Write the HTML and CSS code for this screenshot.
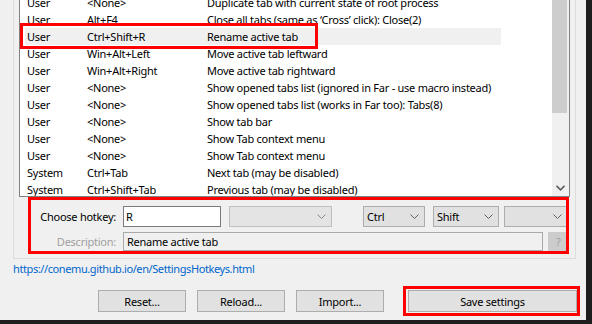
FILE: index.html
```html
<!DOCTYPE html>
<html lang="en">
<head>
  <meta charset="UTF-8" />
  <title>Settings - Keys &amp; Macro</title>
  <link rel="stylesheet" href="styles.css">
</head>
<body>
  <div class="window">
    <div class="group">
      <div class="list">
        <div class="list-rows">
          <div class="row"><span class="cell c-type">User</span><span class="cell c-key">&lt;None&gt;</span><span class="cell c-desc">Duplicate tab with current state of root process</span></div>
          <div class="row"><span class="cell c-type">User</span><span class="cell c-key">Alt+F4</span><span class="cell c-desc">Close all tabs (same as ‘Cross’ click): Close(2)</span></div>
          <div class="row selected marked"><span class="cell c-type">User</span><span class="cell c-key">Ctrl+Shift+R</span><span class="cell c-desc">Rename active tab</span></div>
          <div class="row"><span class="cell c-type">User</span><span class="cell c-key">Win+Alt+Left</span><span class="cell c-desc">Move active tab leftward</span></div>
          <div class="row"><span class="cell c-type">User</span><span class="cell c-key">Win+Alt+Right</span><span class="cell c-desc">Move active tab rightward</span></div>
          <div class="row"><span class="cell c-type">User</span><span class="cell c-key">&lt;None&gt;</span><span class="cell c-desc">Show opened tabs list (ignored in Far - use macro instead)</span></div>
          <div class="row"><span class="cell c-type">User</span><span class="cell c-key">&lt;None&gt;</span><span class="cell c-desc">Show opened tabs list (works in Far too): Tabs(8)</span></div>
          <div class="row"><span class="cell c-type">User</span><span class="cell c-key">&lt;None&gt;</span><span class="cell c-desc">Show tab bar</span></div>
          <div class="row"><span class="cell c-type">User</span><span class="cell c-key">&lt;None&gt;</span><span class="cell c-desc">Show Tab context menu</span></div>
          <div class="row"><span class="cell c-type">User</span><span class="cell c-key">&lt;None&gt;</span><span class="cell c-desc">Show Tab context menu</span></div>
          <div class="row"><span class="cell c-type">System</span><span class="cell c-key">Ctrl+Tab</span><span class="cell c-desc">Next tab (may be disabled)</span></div>
          <div class="row"><span class="cell c-type">System</span><span class="cell c-key">Ctrl+Shift+Tab</span><span class="cell c-desc">Previous tab (may be disabled)</span></div>
        </div>
        <div class="scrollbar">
          <div class="thumb"></div>
          <div class="scroll-arrow">
            <svg width="9" height="6" viewBox="0 0 9 6"><polyline points="0.5,0.8 4.5,4.8 8.5,0.8" fill="none" stroke="#606060" stroke-width="1.6"/></svg>
          </div>
        </div>
      </div>

      <div class="hotkey-panel">
        <div class="field-row">
          <span class="field-label">Choose hotkey:</span>
          <input class="key-input" type="text" value="R">
          <div class="combo combo-key disabled"><span class="combo-text"></span>
            <svg class="chevron" width="9" height="5" viewBox="0 0 9 5"><polyline points="0.5,0.5 4.5,4.5 8.5,0.5" fill="none" stroke="#8a8a8a" stroke-width="1"/></svg>
          </div>
          <div class="combo combo-mod1"><span class="combo-text">Ctrl</span>
            <svg class="chevron" width="9" height="5" viewBox="0 0 9 5"><polyline points="0.5,0.5 4.5,4.5 8.5,0.5" fill="none" stroke="#606060" stroke-width="1"/></svg>
          </div>
          <div class="combo combo-mod2"><span class="combo-text">Shift</span>
            <svg class="chevron" width="9" height="5" viewBox="0 0 9 5"><polyline points="0.5,0.5 4.5,4.5 8.5,0.5" fill="none" stroke="#606060" stroke-width="1"/></svg>
          </div>
          <div class="combo combo-mod3"><span class="combo-text"></span>
            <svg class="chevron" width="9" height="5" viewBox="0 0 9 5"><polyline points="0.5,0.5 4.5,4.5 8.5,0.5" fill="none" stroke="#606060" stroke-width="1"/></svg>
          </div>
        </div>
        <div class="field-row second">
          <span class="field-label disabled">Description:</span>
          <div class="desc-field">Rename active tab</div>
          <button class="help-btn">?</button>
        </div>
      </div>
    </div>

    <a class="help-link" href="#">https://conemu.github.io/en/SettingsHotkeys.html</a>

    <div class="button-row">
      <button class="btn">Reset...</button>
      <button class="btn">Reload...</button>
      <button class="btn">Import...</button>
      <div class="mark-box"><button class="btn btn-save">Save settings</button></div>
    </div>
  </div>
</body>
</html>
```

FILE: styles.css
```css
body {
  margin: 0;
  background: #1e1e1e;
  font-family: 'Noto Sans', 'Segoe UI', sans-serif;
  font-size: 11px;
  letter-spacing: -0.25px;
  color: #000;
  overflow: hidden;
}
.window {
  width: 586px;
  height: 320px;
  background: #f0f0f0;
  overflow: hidden;
}

/* group box holding list + editor */
.group {
  box-sizing: border-box;
  width: 563px;
  margin: -20px 0 0 13px;
  padding: 0 5px 4px 5px;
  border: 1px solid #dcdcdc;
}
.list {
  box-sizing: border-box;
  height: 216px;
  border: 1px solid #828282;
  background: #fff;
  display: flex;
}
.list-rows {
  flex: 1;
  overflow: hidden;
  padding-top: 12px;
}
.row {
  display: flex;
  width: 476px;
  height: 17px;
  line-height: 17px;
  margin-left: 5px;
  white-space: nowrap;
  position: relative;
}
.row.selected {
  background: #f0f0f0;
}
.row.marked::after {
  content: "";
  position: absolute;
  left: -5px;
  top: -5px;
  width: 298px;
  height: 26px;
  box-sizing: border-box;
  border: 3px solid #ff0000;
}
.cell {
  padding-left: 2px;
  box-sizing: border-box;
  flex: none;
}
.c-type { width: 60px; }
.c-key { width: 120px; }
.c-desc { flex: 1 0 auto; }

.scrollbar {
  width: 17px;
  background: #f0f0f0;
  display: flex;
  flex-direction: column;
}
.thumb {
  width: 15px;
  height: 131px;
  background: #cdcdcd;
}
.scroll-arrow {
  margin-top: auto;
  height: 17px;
  display: flex;
  align-items: center;
  justify-content: center;
}

/* hotkey editor */
.hotkey-panel {
  box-sizing: border-box;
  width: 541px;
  height: 57px;
  margin-left: 9px;
  padding-top: 6px;
  border: 3px solid #ff0000;
  overflow: hidden;
}
.field-row {
  display: flex;
  align-items: center;
  height: 21px;
}
.field-row.second {
  height: 19px;
  margin-top: 5px;
}
.field-label {
  width: 92px;
  padding-right: 7px;
  box-sizing: border-box;
  text-align: right;
  white-space: nowrap;
  flex-shrink: 0;
}
.field-label.disabled {
  color: #a0a0a0;
}
.key-input {
  box-sizing: border-box;
  width: 98px;
  height: 21px;
  margin: 0;
  padding: 0 2px;
  border: 1px solid #7a7a7a;
  background: #fff;
  font: inherit;
  letter-spacing: inherit;
  color: #000;
  outline: none;
}
.combo {
  box-sizing: border-box;
  height: 21px;
  display: flex;
  align-items: center;
  padding: 0 5px 0 3px;
  border: 1px solid #adadad;
  background: #e1e1e1;
  flex-shrink: 0;
}
.combo.disabled {
  border-color: #bfbfbf;
  background: #e4e4e4;
}
.combo-text { flex: 1; }
.chevron { flex-shrink: 0; }
.combo-key { width: 103px; margin-left: 8px; }
.combo-mod1 { width: 62px; margin-left: 31px; }
.combo-mod2 { width: 66px; margin-left: 8px; }
.combo-mod3 { width: 64px; margin-left: 5px; }

.desc-field {
  box-sizing: border-box;
  width: 420px;
  height: 19px;
  line-height: 17px;
  padding: 0 3px;
  border: 1px solid #a9a9a9;
  background: #f0f0f0;
  white-space: nowrap;
  flex-shrink: 0;
}
.help-btn {
  box-sizing: border-box;
  width: 21px;
  height: 19px;
  margin: 0 0 0 5px;
  padding: 0;
  border: none;
  background: #cccccc;
  color: #a0a0a0;
  font: inherit;
  flex-shrink: 0;
}

.help-link {
  display: block;
  margin: 2px 0 0 13px;
  line-height: 16px;
  letter-spacing: -0.4px;
  color: #0066cc;
  text-decoration: none;
}

.button-row {
  display: flex;
  align-items: center;
  margin: 9px 0 0 98px;
}
.btn {
  box-sizing: border-box;
  width: 88px;
  height: 22px;
  margin: 0 11px 0 0;
  padding: 0;
  border: 1px solid #adadad;
  background: #e1e1e1;
  font: inherit;
  letter-spacing: inherit;
  color: #000;
}
.btn:nth-child(3) {
  margin-right: 19px;
}
.mark-box {
  padding: 1px 0 1px 2px;
  border: 3px solid #ff0000;
}
.btn-save {
  width: 169px;
  margin: 0;
}
```
